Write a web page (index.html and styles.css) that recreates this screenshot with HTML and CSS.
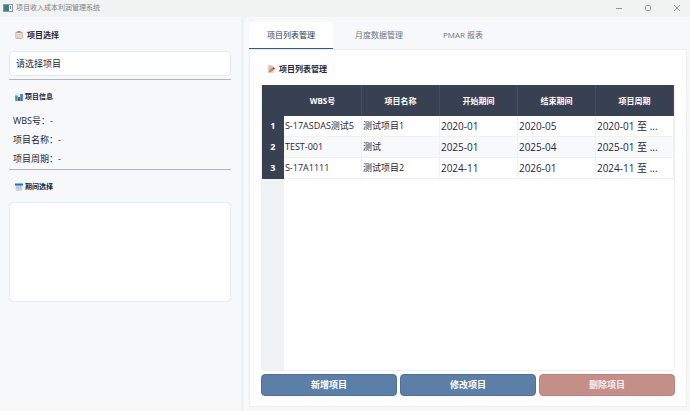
FILE: index.html
```html
<!DOCTYPE html>
<html lang="zh-CN">
<head>
<meta charset="utf-8">
<meta name="viewport" content="width=device-width, initial-scale=1">
<title>项目收入成本利润管理系统</title>
<link rel="stylesheet" href="styles.css">
</head>
<body>
<header class="titlebar">
  <svg class="app-icon" viewBox="0 0 10 8" aria-hidden="true"><rect x=".5" y=".5" width="9" height="7" fill="#fff" stroke="#8b9696"/><rect x="1" y="1" width="5" height="6" fill="#3f7f80"/><rect x="7" y="2" width="1" height="3" fill="#63808a"/></svg>
  <h1 class="app-title">项目收入成本利润管理系统</h1>
  <div class="window-controls">
    <button type="button" aria-label="最小化"><svg viewBox="0 0 8 8"><path d="M1 4.5h6"/></svg></button>
    <button type="button" aria-label="最大化"><svg viewBox="0 0 8 8"><rect x="1.500" y="1.500" width="5" height="5" rx="1"/></svg></button>
    <button type="button" aria-label="关闭"><svg viewBox="0 0 8 8"><path d="M1 1l6 6M7 1L1 7"/></svg></button>
  </div>
</header>
<div class="workspace">
  <aside class="sidebar">
    <label class="heading" for="project">
      <svg viewBox="0 0 8 8" aria-hidden="true"><rect x=".5" y=".8" width="7" height="7" rx=".7" fill="#d99362"/><rect x="1.3" y="1.8" width="5.4" height="5.3" fill="#f1eff0"/><rect x="2.5" y="0" width="3" height="1.8" rx=".5" fill="#8d9197"/><path d="M2 3.5h4M2 5h4M2 6.3h3" stroke="#a0a0aa" stroke-width=".5"/></svg>
      项目选择
    </label>
    <select id="project" class="project-select"><option>请选择项目</option></select>
    <hr>
    <h2 class="heading heading-small">
      <svg viewBox="0 0 8 8" aria-hidden="true"><rect width="8" height="8" rx=".5" fill="#e4edf4"/><rect x=".2" y="2.500" width="2.400" height="5.500" fill="#00c965"/><rect x="2.800" y="4" width="2.300" height="4" fill="#dc2464"/><rect x="5.300" y="1" width="2.500" height="7" fill="#1684d8"/></svg>
      项目信息
    </h2>
    <div class="info">
      <p>WBS号：-</p>
      <p>项目名称：-</p>
      <p>项目周期：-</p>
    </div>
    <hr>
    <h2 class="heading heading-small">
      <svg viewBox="0 0 8 8" aria-hidden="true"><path d="M.5 2h7v4.5L6.3 8H.5z" fill="#d2d6dd"/><path d="M0 .5h8v2H0z" fill="#0d7dcc"/><path d="M1.5 4h5M1.5 5.5h5" stroke="#a5abb6" stroke-width=".7" stroke-dasharray="1 .6"/></svg>
      期间选择
    </h2>
    <div class="period-list" role="listbox" aria-label="期间选择"></div>
  </aside>
  <main class="content">
    <div class="tabs" role="tablist">
      <button type="button" role="tab" class="tab tab-active" aria-selected="true">项目列表管理</button>
      <button type="button" role="tab" class="tab" aria-selected="false">月度数据管理</button>
      <button type="button" role="tab" class="tab" aria-selected="false">PMAR 报表</button>
    </div>
    <section class="pane" role="tabpanel">
      <h2 class="heading heading-pane">
        <svg viewBox="0 0 8 8" aria-hidden="true"><path d="M.7 0h4.500L7 1.800V8H.7z" fill="#d5d9df"/><path d="M2 2h3M2 3.300h2" stroke="#9ba3ae" stroke-width=".6"/><path d="M1.500 7.600l.7-2.600L5.300 3l1.500 1.700L4 7z" fill="#f58220"/><path d="M5.300 3l1.200-1L8 3.700l-1.200 1z" fill="#e4125f"/></svg>
        项目列表管理
      </h2>
      <div class="table-wrap">
        <table class="projects">
          <colgroup><col class="index-col"><col><col><col><col><col></colgroup>
          <thead>
            <tr><td></td><th scope="col">WBS号</th><th scope="col">项目名称</th><th scope="col">开始期间</th><th scope="col">结束期间</th><th scope="col">项目周期</th></tr>
          </thead>
          <tbody>
            <tr><th scope="row">1</th><td>S-17ASDAS测试5</td><td>测试项目1</td><td class="date">2020-01</td><td class="date">2020-05</td><td class="date">2020-01 至 ...</td></tr>
            <tr><th scope="row">2</th><td>TEST-001</td><td>测试</td><td class="date">2025-01</td><td class="date">2025-04</td><td class="date">2025-01 至 ...</td></tr>
            <tr><th scope="row">3</th><td>S-17A1111</td><td>测试项目2</td><td class="date">2024-11</td><td class="date">2026-01</td><td class="date">2024-11 至 ...</td></tr>
          </tbody>
        </table>
      </div>
      <div class="actions">
        <button type="button" class="action">新增项目</button>
        <button type="button" class="action">修改项目</button>
        <button type="button" class="action action-danger">删除项目</button>
      </div>
    </section>
  </main>
</div>
</body>
</html>
```
FILE: styles.css
```css
* { box-sizing: border-box; }

body {
  margin: 0;
  min-height: 100vh;
  display: flex;
  flex-direction: column;
  background: #f7f8fa;
  color: #1d2838;
  font: 9px/12px "Open Sans", "Noto Sans CJK SC", sans-serif;
}

button, select { font: inherit; color: inherit; }
h1, h2, p { margin: 0; font-size: inherit; }

.titlebar {
  height: 17px;
  flex: none;
  display: flex;
  align-items: center;
  gap: 3px;
  padding: 0 9px 2px 3px;
  background: #f1f3f2;
}
.app-icon { width: 10px; height: 8px; }
.app-title { color: #7c8183; font-size: 7px; font-weight: 400; }
.window-controls { display: flex; gap: 21px; margin-left: auto; }
.window-controls button { display: flex; padding: 0; border: 0; background: none; }
.window-controls svg { width: 8px; height: 8px; fill: none; stroke: #949494; stroke-width: 1; }

.workspace {
  flex: 1;
  display: grid;
  grid-template-columns: 35fr 64fr;
}

.sidebar {
  padding: 9px 10px 9px 9px;
  border-right: 3px solid #f0f1f1;
  display: flex;
  flex-direction: column;
}
.heading {
  display: flex;
  align-items: center;
  gap: 4px;
  height: 18px;
  padding-left: 6px;
  color: #1b2739;
  font-size: 8px;
  font-weight: 700;
}
.heading svg { width: 8px; height: 8px; }
.heading-small { height: 34px; gap: 2px; font-size: 7px; }
.heading-pane { height: 35px; padding-top: 3px; }

.project-select {
  appearance: none;
  width: 100%;
  height: 25px;
  margin: 7px 0 3px;
  padding: 0 6px;
  border: 1px solid #e5e8ed;
  border-radius: 4px;
  background: #fff;
}
hr { width: 100%; margin: 0; border: 0; border-top: 1px solid #b4b6b9; }
.info {
  display: grid;
  align-content: end;
  height: 55px;
  padding: 0 4px 1px;
  line-height: 19px;
}
.period-list {
  height: 100px;
  margin-top: -2px;
  border: 1px solid #e8eaee;
  border-radius: 4px;
  background: #fff;
}

.content {
  min-width: 0;
  display: flex;
  flex-direction: column;
  padding: 5px 3px 4px 5px;
}
.tabs { display: flex; gap: 4px; height: 27px; }
.tab {
  padding: 0 18px;
  border: 0;
  border-bottom: 1px solid transparent;
  background: none;
  color: #6d7682;
  font-size: 8px;
}
.tab-active {
  border-color: #285b91;
  border-radius: 3px 3px 0 0;
  background: #fff;
  color: #263d59;
}
.pane {
  flex: 1;
  display: flex;
  flex-direction: column;
  padding: 0 11px 10px;
  border: 1px solid #eceef1;
  background: #fff;
}
.table-wrap {
  flex: 1;
  border: 1px solid #eceef1;
  border-top: 0;
  border-radius: 0 0 4px 4px;
  background: linear-gradient(to right, #f1f2f4 22px, #fff 22px);
}
.projects { width: 100%; table-layout: fixed; border-collapse: separate; border-spacing: 0; }
.index-col { width: 22px; }
.projects th { padding: 0; background: #384151; color: #fff; font-weight: 700; }
.projects thead td { background: #384151; }
.projects thead th { height: 31px; border-right: 1px solid #435063; font-size: 8px; }
.projects tbody th { height: 21px; border-bottom: 1px solid #384151; text-align: center; }
.projects tbody td {
  padding: 0 1px;
  border-right: 1px solid #f0f1f3;
  border-bottom: 1px solid #f0f1f3;
  background: #fff;
  white-space: nowrap;
}
.projects .date { font-size: 10px; }
.projects tbody tr:nth-child(even) td { background: #f8f9fa; }

.actions { display: grid; grid-template-columns: repeat(3, 1fr); gap: 3px; margin-top: 3px; }
.action {
  height: 22px;
  padding: 0;
  border: 1px solid #4d719a;
  border-radius: 4px;
  background: #5b7fa6;
  color: #fff;
  font-weight: 700;
}
.action-danger { border-color: #bf817b; background: #c48f88; color: #f8eeed; }
```
